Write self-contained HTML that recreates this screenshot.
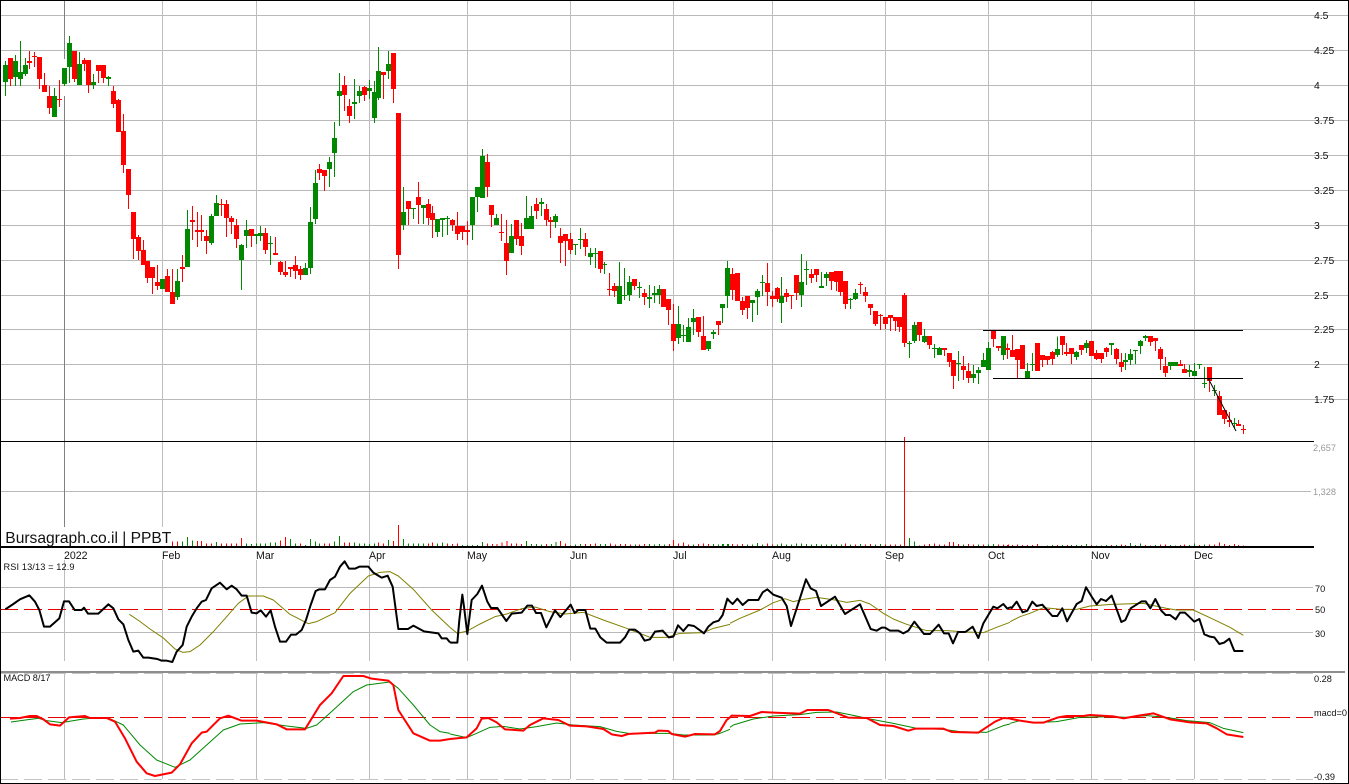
<!DOCTYPE html>
<html><head><meta charset="utf-8"><title>Bursagraph.co.il | PPBT</title>
<style>
html,body{margin:0;padding:0;background:#fff;width:1349px;height:784px;overflow:hidden}
svg{display:block}
text{font-family:"Liberation Sans",Arial,sans-serif;font-size:10.4px;fill:#111}
text.s{font-size:9.2px}
text.m{font-size:10.6px}
.c{fill:none;shape-rendering:crispEdges}
.l{fill:none;stroke-linejoin:round}
</style></head><body>
<svg width="1349" height="784" viewBox="0 0 1349 784" xmlns="http://www.w3.org/2000/svg">
<rect width="1349" height="784" fill="#fff"/>
<!-- horizontal grid -->
<path class="c" stroke="#b9b9b9" stroke-width="1" d="M1 15.5H1348M1 50.5H1348M1 85.5H1348M1 120.5H1348M1 155.5H1348M1 190.5H1348M1 225.5H1348M1 260.5H1348M1 295.5H1348M1 329.5H1348M1 364.5H1348M1 399.5H1348M1 491.5H1311M1 587.5H1313M1 632.5H1313"/>
<!-- vertical grid -->
<path class="c" stroke="#bdbdbd" stroke-width="1" d="M162.5 1V546M256.5 1V546M369.5 1V546M467.5 1V546M570.5 1V546M673.5 1V546M772.5 1V546M885.5 1V546M988.5 1V546M1091.5 1V546M1194.5 1V546M64.5 560V661M162.5 560V661M256.5 560V661M369.5 560V661M467.5 560V661M570.5 560V661M673.5 560V661M772.5 560V661M885.5 560V661M988.5 560V661M1091.5 560V661M1194.5 560V661M64.5 673V779M162.5 673V779M256.5 673V779M369.5 673V779M467.5 673V779M570.5 673V779M673.5 673V779M772.5 673V779M885.5 673V779M988.5 673V779M1091.5 673V779M1194.5 673V779"/>
<path class="c" stroke="#808080" stroke-width="1" d="M64.5 1V59M64.5 96V527"/>
<!-- volume -->
<g transform="translate(.167 430) scale(.33333)" class="c" stroke-width="3">
<path stroke="#f00" d="M517 335V350M532 335V350M592 333V350M604 333V350M619 340V350M634 340V350M664 340V350M679 340V350M694 340V350M709 340V350M724 324V350M841 332V350M856 321V350M901 340V350M973 340V350M988 340V350M1033 337V350M1048 337V350M1135 337V350M1150 340V350M1180 333V350M1195 285V350M1285 340V350M1297 338V350"/>
<path stroke="#080" d="M547 335V350M562 321V350M577 332V350M649 336V350M739 340V350M754 342V350M769 340V350M781 340V350M796 340V350M811 337V350M826 337V350M871 327V350M886 340V350M916 345V350M931 327V350M946 335V350M958 340V350M1003 335V350M1018 318V350M1063 337V350M1078 340V350M1093 340V350M1108 342V350M1123 340V350M1165 330V350M1210 327V350M1225 340V350M1240 340V350M1255 340V350M1270 340V350M1312 340V350M1327 338V350M1342 340V350"/>
</g>
<g transform="translate(440.167 520) scale(.33333)" class="c" stroke-width="3">
<path stroke="#f00" d="M22 72V80M37 72V80M52 70V80M142 70V80M157 72V80M170 72V80M185 68V80M200 63V80M214 70V80M229 70V80M244 72V80M319 72V80M361 63V80M376 70V80M391 76V80M436 72V80M451 72V80M466 70V80M511 70V80M526 74V80M541 72V80M556 72V80M571 74V80M598 74V80M613 72V80M688 72V80M700 60V80M715 70V80M730 68V80M745 74V80M775 72V80M790 70V80M805 72V80"/>
<path stroke="#080" d="M7 70V80M67 75V80M82 75V80M97 75V80M112 75V80M127 66V80M259 63V80M274 72V80M289 72V80M304 74V80M334 72V80M347 66V80M406 74V80M421 72V80M481 72V80M496 72V80M586 74V80M628 72V80M643 74V80M658 72V80M673 74V80M760 74V80M820 72V80M835 74V80M850 72V80M865 72V80"/>
</g>
<g transform="translate(720.167 520) scale(.33333)" class="c" stroke-width="3">
<path stroke="#f00" d="M37 72V80M52 74V80M67 72V80M142 70V80M157 73V80M376 70V80M406 74V80M436 74V80M451 72V80M496 74V80M511 74V80M526 74V80M541 74V80M553 -249V80M598 76V80M613 74V80M628 72V80M643 70V80M658 74V80M673 74V80M688 66V80M700 66V80M715 72V80M745 72V80M760 74V80M790 74V80M835 74V80M850 74V80M865 74V80"/>
<path stroke="#080" d="M7 72V80M22 72V80M82 74V80M97 74V80M112 69V80M127 74V80M172 74V80M184 70V80M199 74V80M214 74V80M229 70V80M244 70V80M259 72V80M274 74V80M289 72V80M304 74V80M319 74V80M334 74V80M349 74V80M364 74V80M391 74V80M421 72V80M466 74V80M481 72V80M568 54V80M583 64V80M730 74V80M775 74V80M805 74V80M820 72V80"/>
</g>
<g transform="translate(1000.167 300) scale(.33333)" class="c" stroke-width="3">
<path stroke="#f00" d="M22 735V740M37 735V740M52 733V740M67 735V740M82 735V740M97 735V740M112 732V740M172 735V740M202 735V740M274 735V740M334 735V740M364 733V740M376 735V740M436 735V740M451 736V740M481 733V740M496 733V740M541 735V740M553 733V740M598 735V740M628 733V740M643 733V740M658 727V740M673 732V740M688 735V740M703 732V740M715 735V740M730 736V740"/>
<path stroke="#080" d="M142 736V740M157 735V740M187 735V740M214 735V740M229 735V740M244 735V740M259 732V740M289 736V740M304 736V740M319 735V740M349 735V740M391 729V740M406 735V740M421 730V740M466 735V740M511 735V740M526 736V740M568 735V740M583 730V740M613 733V740"/>
</g>
<!-- pane separators -->
<rect x="1" y="441" width="1313" height="1" fill="#000"/>
<rect x="1" y="546" width="1313" height="2" fill="#000"/>
<rect x="1" y="671" width="1344" height="2" fill="#8e8e8e"/>
<!-- dashed -->
<path class="c" stroke="#c4c4c4" stroke-width="1" stroke-dasharray="18 6" d="M0 673.5H1313M0 779.5H1313"/>
<path class="c" stroke="#e80000" stroke-width="1" stroke-dasharray="18 6" d="M0 609.5H1313M0 717.5H1313"/>
<!-- candles A -->
<g transform="translate(.167 0) scale(.33333)" class="c">
<path stroke="#080" stroke-width="3" d="M16 183V288M46 165V258M61 123V258M76 174V228M163 264V351M193 204V258M208 108V249M238 156V255M280 222V267M325 228V258M487 837V867M532 807V900M562 630V801M634 642V735M649 585V648M724 732V870M739 660V744M769 702V732M781 678V723M811 708V795M916 789V825M931 621V822M946 510V672M988 471V561M1003 366V531M1018 219V378M1063 237V357M1078 258V309M1108 240V297M1123 243V369M1135 141V300M1165 153V237M1210 561V690M1240 624V657M1270 615V672M1312 657V711M1327 654V711M1342 648V705"/>
<path stroke="#080" stroke-width="15" d="M16 195V246M46 183V231M61 216V237M76 195V222M163 288V351M193 204V252M208 129V201M238 192V255M280 246V255M325 231V237M487 837V867M532 843V891M562 687V801M634 648V729M649 609V648M724 735V780M739 690V708M769 702V708M781 699V708M811 729V732M916 804V825M931 666V804M946 549V657M988 486V507M1003 414V459M1018 273V288M1063 306V312M1078 273V288M1108 264V273M1123 276V354M1135 213V294M1165 192V213M1210 636V675M1240 624V627M1270 615V624M1312 657V696M1327 654V660M1342 654V657"/>
<path stroke="#f00" stroke-width="3" d="M31 174V258M88 153V207M103 156V201M118 171V267M133 219V276M148 258V342M178 240V321M223 153V246M253 174V213M265 180V279M295 195V249M310 195V249M340 258V324M355 297V396M370 342V519M385 507V627M400 636V777M415 705V780M430 720V795M442 783V849M457 801V882M472 795V870M502 807V876M517 807V912M547 765V846M577 618V720M592 636V741M604 645V723M619 690V762M664 597V648M679 600V711M694 648V702M709 657V744M754 687V741M796 684V762M826 711V765M841 783V825M856 783V831M871 801V831M886 768V837M901 798V840M958 492V540M973 510V573M1033 228V333M1048 297V369M1093 258V303M1150 216V297M1180 159V309M1195 339V807M1225 603V675M1255 546V672M1285 597V675M1297 618V714"/>
<path stroke="#f00" stroke-width="15" d="M31 174V237M88 183V189M103 168V171M118 171V237M133 255V276M148 288V324M178 297V300M223 153V237M253 180V192M265 180V255M295 195V213M310 195V234M340 273V312M355 300V396M370 393V495M385 507V585M400 636V717M415 711V753M430 750V795M442 783V834M457 801V834M472 846V858M502 828V876M517 876V912M547 801V807M577 660V666M592 690V696M604 690V696M619 708V723M664 612V615M679 612V654M694 654V666M709 675V717M754 687V708M796 699V750M826 759V765M841 786V816M856 816V825M871 801V807M886 795V813M901 807V825M958 507V519M973 510V528M1033 255V285M1048 318V348M1093 261V285M1150 216V225M1180 159V267M1195 339V765M1225 603V627M1255 591V615M1285 612V654M1297 639V660"/>
</g>
<!-- candles B -->
<g transform="translate(380.167 30) scale(.33333)" class="c">
<path stroke="#080" stroke-width="3" d="M202 558V615M277 501V630M292 471V546M307 357V504M349 552V585M394 582V669M439 498V597M454 528V597M484 504V558M526 552V594M586 642V675M601 594V657M631 654V705M646 654V714M673 696V732M718 696V822M733 714V810M748 738V813M778 756V804M808 765V834M823 768V819M838 765V822M895 828V942M910 885V936M925 864V936M940 837V915M985 933V963M1000 900V927M1027 822V879M1042 693V834"/>
<path stroke="#080" stroke-width="15" d="M202 564V567M277 501V585M292 471V501M307 378V504M349 564V585M394 618V669M439 564V597M454 558V597M484 516V522M526 558V576M586 642V645M601 627V630M631 669V681M646 669V672M673 702V705M718 768V822M733 795V798M748 756V795M778 771V774M808 801V807M823 789V795M838 777V795M895 882V924M910 915V918M925 891V936M940 864V876M985 933V957M1000 906V912M1027 822V834M1042 714V798"/>
<path stroke="#f00" stroke-width="3" d="M217 567V603M232 546V630M247 588V630M262 573V645M322 372V501M334 525V591M364 552V633M379 570V735M409 570V645M424 579V675M469 504V567M499 522V588M511 561V624M541 594V699M556 612V708M571 609V672M616 609V678M661 663V729M688 729V798M703 759V801M763 747V780M793 777V825M850 777V831M865 807V885M880 822V963M955 861V921M970 858V960M1015 873V915"/>
<path stroke="#f00" stroke-width="15" d="M217 570V585M232 588V612M247 588V606M262 600V606M322 396V471M334 525V555M364 606V609M379 639V693M409 570V627M424 618V648M469 522V543M499 537V570M511 570V576M541 618V639M556 612V633M571 627V660M616 627V651M661 663V717M688 777V780M703 768V783M763 747V768M793 789V801M850 777V831M865 807V840M880 882V933M955 861V906M970 918V960M1015 873V885"/>
</g>
<!-- candles C -->
<g transform="translate(700.167 240) scale(.33333)" class="c">
<path stroke="#080" stroke-width="3" d="M157 180V246M172 147V225M187 105V168M244 111V249M304 42V201M319 63V135M364 96V144M379 96V138M451 174V207M466 147V180M628 303V354M643 246V309M673 267V309M703 312V354M718 321V345M775 333V423M820 375V429M835 381V432M850 339V381M865 306V390M910 288V360"/>
<path stroke="#080" stroke-width="15" d="M157 180V189M172 153V171M187 126V129M244 168V189M304 126V165M319 87V90M364 138V144M379 102V114M451 177V180M466 159V177M628 309V312M643 255V303M673 288V306M703 324V327M718 324V345M775 369V372M820 402V414M835 390V399M850 360V381M865 324V390M910 288V345"/>
<path stroke="#f00" stroke-width="3" d="M97 84V180M112 99V183M127 171V225M142 168V237M202 69V198M217 153V201M232 141V186M259 147V186M274 165V207M289 105V180M334 87V129M349 87V126M394 96V150M409 93V153M421 93V168M436 123V207M481 126V162M496 141V186M511 192V225M526 213V258M541 222V270M556 231V267M571 225V273M586 231V273M598 231V276M613 159V321M658 246V303M688 288V327M733 324V348M748 339V381M760 360V447M790 348V420M805 369V429M880 270V321M895 318V333"/>
<path stroke="#f00" stroke-width="15" d="M97 102V150M112 99V183M127 183V210M142 168V204M202 129V156M217 168V177M232 144V177M259 159V171M274 165V168M289 105V159M334 102V114M349 87V105M394 96V123M409 93V126M421 93V156M436 123V192M481 132V135M496 156V168M511 192V204M526 213V252M541 225V228M556 231V252M571 225V234M586 231V243M598 231V261M613 165V309M658 246V285M688 288V315M733 324V330M748 339V366M760 360V408M790 378V390M805 393V414M880 270V297M895 318V324"/>
</g>
<!-- candles D -->
<g transform="translate(1000.167 300) scale(.33333)" class="c">
<path stroke="#080" stroke-width="3" d="M82 189V234M97 159V213M172 110V171M229 153V180M259 120V159M334 129V165M376 159V210M391 147V195M406 150V192M421 120V162M436 105V123M511 186V210M526 186V198M568 195V231M583 189V228M598 192V207M613 201V264M643 255V288M703 354V384"/>
<path stroke="#080" stroke-width="15" d="M82 213V234M97 192V195M172 147V165M229 156V171M259 129V144M334 129V135M376 180V186M391 162V180M406 150V153M421 123V138M436 108V114M511 186V198M526 186V198M568 210V216M583 213V228M598 192V195M613 249V252M643 270V273M703 369V372"/>
<path stroke="#f00" stroke-width="3" d="M22 130V177M37 105V171M52 147V234M67 135V207M112 129V213M127 165V201M142 168V195M157 153V195M187 108V165M199 129V168M214 144V192M244 135V165M274 123V168M289 150V180M304 159V189M319 141V171M349 144V192M364 159V216M451 108V138M466 114V153M481 141V210M496 171V231M541 180V198M553 192V219M628 201V276M658 273V345M673 330V372M688 336V381M715 360V378M730 375V402"/>
<path stroke="#f00" stroke-width="15" d="M22 144V150M37 150V171M52 147V180M67 135V207M112 129V213M127 165V180M142 168V180M157 156V177M187 108V135M199 156V162M214 144V162M244 135V150M274 123V168M289 159V177M304 159V177M319 144V156M349 147V177M364 186V201M451 108V126M466 114V123M481 147V177M496 198V219M541 192V198M553 207V219M628 201V243M658 288V345M673 330V357M688 360V366M715 372V378M730 387V390"/>
</g>
<!-- trend lines -->
<path stroke="#000" stroke-width="1" fill="none" shape-rendering="crispEdges" d="M983 330.5H1243M993 378.5H1243"/>
<path stroke="#000" stroke-width="1" fill="none" d="M1208 378L1236 431"/>
<!-- RSI MA -->
<g transform="translate(0 430) scale(.33333)"><polyline class="l" stroke="#808000" stroke-width="3" points="388,553 418,573 450,597 490,624 525,657 548,667 570,665 600,645 640,605 680,560 715,520 745,498 790,498 820,510 870,553 925,581 950,575 1005,548 1050,490 1105,438 1140,427 1170,425 1195,438 1240,478 1295,540 1350,592"/></g>
<g transform="translate(440 520) scale(.33333)"><polyline class="l" stroke="#808000" stroke-width="3" points="30,322 52,340 82,333 120,312 165,290 200,282 245,266 285,261 330,275 375,282 430,277 490,300 560,325 630,352 680,352 720,340 790,338 820,325 870,313"/></g>
<g transform="translate(720 520) scale(.33333)"><polyline class="l" stroke="#808000" stroke-width="3" points="30,310 60,295 120,270 160,248 195,236 220,245 250,238 290,232 345,240 380,247 420,241 450,252 490,280 520,297 560,313 620,332 680,332 740,336 790,338 830,322 870,307"/></g>
<g transform="translate(1000 300) scale(.33333)"><polyline class="l" stroke="#808000" stroke-width="3" points="30,965 60,950 90,940 130,923 185,928 230,928 270,918 335,913 430,910 500,925 530,930 580,930 640,958 690,982 730,1006"/></g>
<!-- RSI -->
<g transform="translate(0 430) scale(.33333)"><polyline class="l" stroke="#000" stroke-width="6" points="16,538 40,522 60,508 88,496 105,515 118,540 132,590 150,590 178,565 192,514 207,514 224,540 245,540 252,533 264,551 295,551 325,523 340,535 355,568 370,583 385,630 400,665 415,662 430,683 445,683 472,687 485,692 500,692 517,696 530,665 548,645 560,590 575,560 590,535 605,515 618,510 635,475 660,458 680,478 695,467 710,478 725,497 740,497 755,548 770,550 782,541 798,560 812,541 825,590 840,635 858,635 873,614 888,614 905,600 918,570 932,525 947,483 958,478 975,478 990,450 1005,440 1020,410 1034,394 1047,416 1065,416 1078,410 1105,410 1120,428 1145,443 1163,437 1178,470 1195,597 1224,597 1240,587 1272,604 1285,606 1315,610 1325,625 1340,625 1350,637"/></g>
<g transform="translate(440 520) scale(.33333)"><polyline class="l" stroke="#000" stroke-width="6" points="30,367 35,368 52,368 58,300 67,224 72,260 82,342 95,240 112,222 126,197 142,245 153,264 172,264 199,303 215,281 245,278 262,257 276,257 288,279 303,279 319,322 345,271 361,291 392,254 404,279 415,270 436,270 451,326 466,326 481,352 500,368 540,368 555,352 568,329 585,329 600,340 614,362 630,358 645,335 668,332 686,352 700,350 714,316 730,333 745,315 762,318 792,340 805,320 820,307 836,302 848,285 862,236 870,245"/></g>
<g transform="translate(720 520) scale(.33333)"><polyline class="l" stroke="#000" stroke-width="6" points="30,245 38,252 52,236 68,255 85,240 115,240 128,217 142,208 160,224 185,233 200,258 213,318 235,250 258,178 272,205 288,213 303,258 345,230 375,282 420,253 452,327 470,332 485,323 495,323 510,332 535,332 550,340 565,332 583,305 612,342 630,342 656,314 672,340 686,340 699,370 714,336 736,336 758,320 775,354 790,310 805,285 820,260 832,265 850,252 862,266 870,262"/></g>
<g transform="translate(1000 300) scale(.33333)"><polyline class="l" stroke="#000" stroke-width="6" points="30,921 35,924 50,905 68,937 82,932 97,905 110,918 127,914 157,948 172,948 187,925 201,964 230,912 245,903 258,862 275,890 290,913 303,897 318,903 335,887 364,966 376,960 392,925 425,904 437,904 451,925 466,897 484,932 497,945 510,945 527,958 540,938 555,938 583,965 598,957 613,1003 630,1010 643,1012 658,1032 672,1028 688,1016 703,1053 730,1053"/></g>
<!-- MACD signal -->
<g transform="translate(0 430) scale(.33333)"><polyline class="l" stroke="#080" stroke-width="3" points="33,876 90,868 115,865 140,872 185,878 250,867 300,863 330,866 370,885 420,945 470,990 525,1012 570,990 620,945 670,900 720,882 790,878 860,888 920,895 950,885 1000,840 1060,785 1100,765 1170,756 1195,775 1240,825 1290,885 1320,905 1350,910"/></g>
<g transform="translate(440 520) scale(.33333)"><polyline class="l" stroke="#080" stroke-width="3" points="30,642 80,653 110,640 150,622 190,619 240,627 290,620 350,609 400,615 480,620 530,634 570,641 630,640 690,640 730,645 780,645 820,645 840,640 870,628"/></g>
<g transform="translate(720 520) scale(.33333)"><polyline class="l" stroke="#080" stroke-width="3" points="30,622 40,615 100,597 160,588 240,584 290,577 350,576 400,586 450,597 520,610 590,625 670,628 720,635 800,637 850,617 870,612"/></g>
<g transform="translate(1000 300) scale(.33333)"><polyline class="l" stroke="#080" stroke-width="3" points="30,1270 60,1262 100,1268 170,1265 240,1252 340,1250 380,1252 440,1247 500,1252 560,1262 630,1268 670,1285 730,1298"/></g>
<!-- MACD -->
<g transform="translate(0 430) scale(.33333)"><polyline class="l" stroke="#f00" stroke-width="6" points="30,866 60,864 90,858 110,858 130,868 150,883 180,887 207,862 255,858 270,864 320,864 345,875 375,925 410,995 440,1030 465,1038 515,1028 540,1003 575,940 605,908 620,905 660,865 685,857 725,872 770,872 830,883 860,898 915,898 960,825 995,790 1030,738 1090,738 1115,746 1165,752 1180,765 1195,840 1240,910 1290,932 1320,932 1350,927"/></g>
<g transform="translate(440 520) scale(.33333)"><polyline class="l" stroke="#f00" stroke-width="6" points="30,657 80,652 110,625 125,596 145,594 170,607 195,628 250,632 270,615 310,595 355,600 390,617 440,619 490,627 515,643 545,648 565,642 600,640 645,638 655,632 685,633 695,642 735,650 765,642 825,643 840,633 860,600 870,592"/></g>
<g transform="translate(720 520) scale(.33333)"><polyline class="l" stroke="#f00" stroke-width="6" points="30,592 35,587 90,588 125,576 160,578 240,581 262,570 325,570 385,593 440,594 480,615 520,618 565,632 585,626 670,626 695,636 775,638 825,605 850,594 870,595"/></g>
<g transform="translate(1000 300) scale(.33333)"><polyline class="l" stroke="#f00" stroke-width="6" points="30,1256 60,1262 100,1268 130,1268 175,1252 200,1248 250,1248 270,1245 340,1249 370,1255 410,1248 460,1240 510,1258 570,1267 620,1270 650,1285 680,1303 730,1311"/></g>
<!-- watermark -->
<rect x="1" y="527" width="171" height="19" fill="#fff"/>
<text x="5.3" y="543" style="font-size:15.6px" textLength="166">Bursagraph.co.il | PPBT</text>
<!-- price labels -->
<text x="1314" y="19">4.5</text><text x="1314" y="54">4.25</text><text x="1314" y="89">4</text><text x="1314" y="124">3.75</text><text x="1314" y="159">3.5</text><text x="1314" y="194">3.25</text><text x="1314" y="229">3</text><text x="1314" y="264">2.75</text><text x="1314" y="299">2.5</text><text x="1314" y="333">2.25</text><text x="1314" y="368">2</text><text x="1314" y="403">1.75</text>
<text class="s" x="1313" y="451" style="fill:#999">2,657</text><text class="s" x="1313" y="495" style="fill:#999">1,328</text>
<text class="s" x="1315" y="592">70</text><text class="s" x="1315" y="613">50</text><text class="s" x="1315" y="637">30</text>
<text class="s" x="1314" y="682">0.28</text><text class="s" x="1314" y="716">macd=0</text><text class="s" x="1314" y="780">-0.39</text>
<!-- month labels -->
<text class="m" x="64" y="559">2022</text><text class="m" x="162" y="559">Feb</text><text class="m" x="256" y="559">Mar</text><text class="m" x="369" y="559">Apr</text><text class="m" x="467" y="559">May</text><text class="m" x="570" y="559">Jun</text><text class="m" x="673" y="559">Jul</text><text class="m" x="772" y="559">Aug</text><text class="m" x="885" y="559">Sep</text><text class="m" x="988" y="559">Oct</text><text class="m" x="1091" y="559">Nov</text><text class="m" x="1194" y="559">Dec</text>
<text x="3.5" y="570" style="font-size:9.2px" textLength="71">RSI 13/13 = 12.9</text>
<text x="3.5" y="681" style="font-size:9.2px" textLength="47">MACD 8/17</text>
<!-- border -->
<rect x=".5" y=".5" width="1348" height="783" fill="none" stroke="#000" stroke-width="1" shape-rendering="crispEdges"/>
</svg>
</body></html>
